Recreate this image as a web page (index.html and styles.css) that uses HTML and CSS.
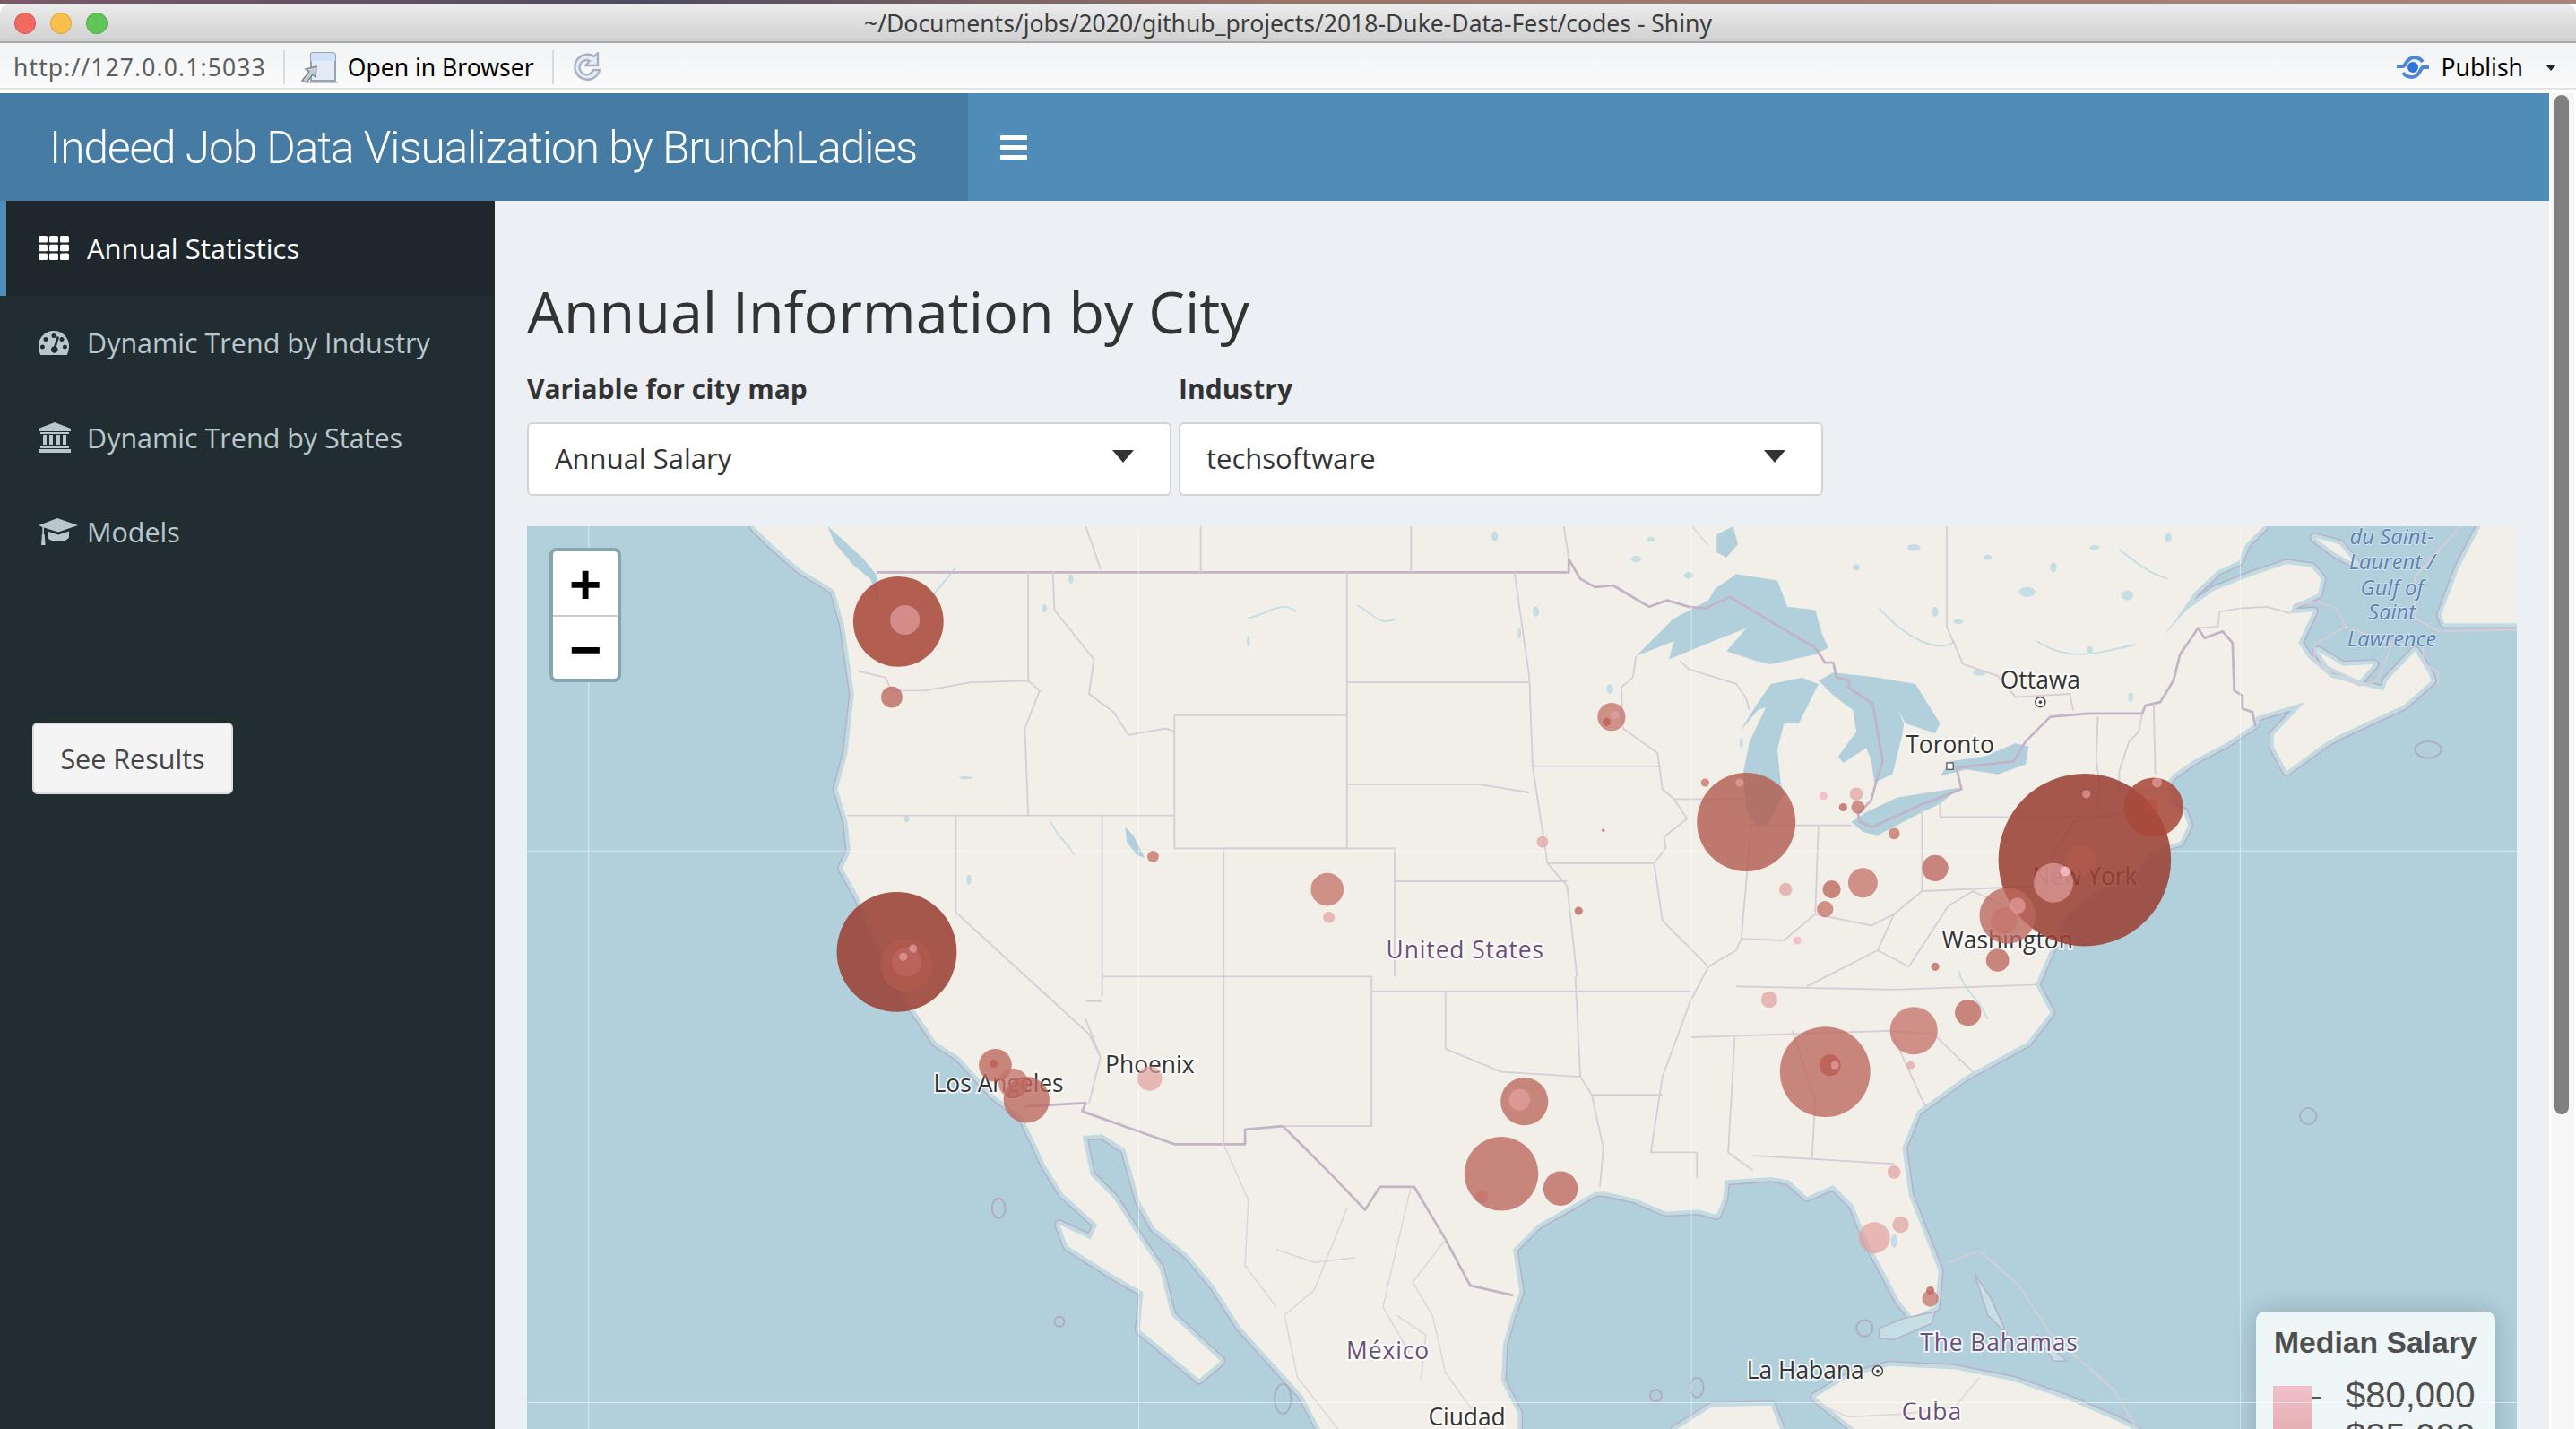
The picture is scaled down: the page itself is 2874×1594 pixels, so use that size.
FILE: index.html
```html
<!DOCTYPE html>
<html lang="en">
<head>
    <meta charset="UTF-8">
    <title>Indeed Job Data Visualization by BrunchLadies</title>
    <link rel="stylesheet" href="styles.css">
</head>
<body>
<div class="window">
    <div class="desktop-strip"></div>

    <div class="titlebar">
        <div class="lights">
            <span class="light red"></span>
            <span class="light yellow"></span>
            <span class="light green"></span>
        </div>
        <div class="window-title">~/Documents/jobs/2020/github_projects/2018-Duke-Data-Fest/codes - Shiny</div>
    </div>

    <div class="toolbar">
        <span class="url">http://127.0.0.1:5033</span>
        <span class="tool-sep"></span>
        <svg class="open-icon" viewBox="0 0 44 38">
            <path d="M14 3h22c2 0 3 1 3 3v28H12V5c0-1 1-2 2-2z" fill="#e3ecf6" stroke="#9aa3ad" stroke-width="2"/>
            <path d="M14 3h22c2 0 3 1 3 3v6H12V5c0-1 1-2 2-2z" fill="#cfe2fa"/>
            <path d="M2 34l8-10-4-3 12-3-1 12-3-3-7 9z" fill="#c5cdd6" stroke="#7f8994" stroke-width="1.5"/>
            <path d="M8 36h34" stroke="#c8ccd2" stroke-width="2"/>
        </svg>
        <span class="open-label">Open in Browser</span>
        <span class="tool-sep second"></span>
        <svg class="refresh-icon" viewBox="0 0 36 38">
            <path d="M32 22a14 14 0 1 1-6-15l4-4v14H16l5-5a8 8 0 1 0 4 10z" fill="#e4ebf5" stroke="#a6b2c4" stroke-width="2.4" stroke-linejoin="round"/>
        </svg>
        <span class="tool-spacer"></span>
        <svg class="publish-icon" viewBox="0 0 38 30">
            <path d="M1 14h7c3-1 4-9 12-10 5 0 8 2 10 5" fill="none" stroke="#4f86d6" stroke-width="4"/>
            <path d="M37 15h-7c-3 2-4 11-12 11-5 0-8-2-10-5" fill="none" stroke="#4f86d6" stroke-width="4"/>
            <circle cx="19" cy="15" r="6" fill="#2f74dc"/>
        </svg>
        <span class="publish-label">Publish</span>
        <span class="publish-caret"></span>
    </div>

    <div class="app">
        <div class="app-main">
            <header class="app-header">
                <div class="logo">Indeed Job Data Visualization by BrunchLadies</div>
                <div class="navbar">
                    <span class="burger"><i></i><i></i><i></i></span>
                </div>
            </header>

            <div class="app-body">
                <aside class="sidebar">
                    <ul class="menu">
                        <li class="menu-item active">
                            <span class="menu-icon">
                                <svg viewBox="0 0 34 27" width="34" height="27">
                                    <rect x="0" y="0" width="10" height="7.5" rx="1.5"/><rect x="12" y="0" width="10" height="7.5" rx="1.5"/><rect x="24" y="0" width="10" height="7.5" rx="1.5"/>
                                    <rect x="0" y="9.7" width="10" height="7.5" rx="1.5"/><rect x="12" y="9.7" width="10" height="7.5" rx="1.5"/><rect x="24" y="9.7" width="10" height="7.5" rx="1.5"/>
                                    <rect x="0" y="19.5" width="10" height="7.5" rx="1.5"/><rect x="12" y="19.5" width="10" height="7.5" rx="1.5"/><rect x="24" y="19.5" width="10" height="7.5" rx="1.5"/>
                                </svg>
                            </span>
                            Annual Statistics
                        </li>
                        <li class="menu-item">
                            <span class="menu-icon">
                                <svg viewBox="0 0 34 27" width="34" height="27">
                                    <path fill-rule="evenodd" d="M17 0c9.500 0 17 7.500 17 17 0 3.500-.8 6.800-2.200 10H2.200C.8 23.800 0 20.500 0 17 0 7.500 7.500 0 17 0zM17 3a2.500 2.500 0 1 0 0 5 2.500 2.500 0 0 0 0-5zM8 7a2.500 2.500 0 1 0 0 5 2.500 2.500 0 0 0 0-5zM26 7a2.500 2.500 0 1 0 0 5 2.500 2.500 0 0 0 0-5zM4.500 15.500a2.500 2.500 0 1 0 0 5 2.500 2.500 0 0 0 0-5zM29.500 15.500a2.500 2.500 0 1 0 0 5 2.500 2.500 0 0 0 0-5zM20.500 6l-3.200 11.200a3.800 3.800 0 1 0 2.600.6L23 7z"/>
                                </svg>
                            </span>
                            Dynamic Trend by Industry
                        </li>
                        <li class="menu-item">
                            <span class="menu-icon">
                                <svg viewBox="0 0 36 34" width="36" height="34">
                                    <path d="M18 0l18 7v3H0V7z"/>
                                    <path d="M2 11h32v2H2zM5 14h4v11H5zM12 14h4v11h-4zM20 14h4v11h-4zM27 14h4v11h-4zM2 26h32v3H2zM0 30h36v4H0z"/>
                                </svg>
                            </span>
                            Dynamic Trend by States
                        </li>
                        <li class="menu-item">
                            <span class="menu-icon">
                                <svg viewBox="0 0 44 30" width="44" height="30">
                                    <path d="M21 0L44 8 22 15.500 6 10.500V18c1 .6 1.200 1.500.8 2.300L7.600 30H3l.8-9.700C3.300 19.500 3.500 18.600 4.400 18V9.900L0 8z"/>
                                    <path d="M10 14.500l12 4 12-4v6c0 3-5.500 5.500-12 5.500s-12-2.500-12-5.500z"/>
                                </svg>
                            </span>
                            Models
                        </li>
                    </ul>
                    <button class="results-btn">See Results</button>
                </aside>

                <main class="content">
                    <h1 class="page-title">Annual Information by City</h1>
                    <div class="filters">
                        <div class="filter">
                            <label class="filter-label">Variable for city map</label>
                            <div class="select-box">Annual Salary<span class="select-caret"></span></div>
                        </div>
                        <div class="filter">
                            <label class="filter-label">Industry</label>
                            <div class="select-box">techsoftware<span class="select-caret"></span></div>
                        </div>
                    </div>

                    <div class="map">
                        <svg class="map-svg" viewBox="321 320 1211 550">
                            <defs>
                                <path id="land" d="M459,320 L469,330 L487,346 L497,352 L508,359 L514,380 L517,401 L520,422 L516,458 L510,480 L516,500 L518,518 L513,528 L523,546 L532,570 L553,609 L570,634 L584,643 L605,666 L623,680 L636,708 L647,726 L668,745 L664,754 L645,745 L650,758 L680,777 L696,786 L694,809 L730,839 L743,828 L713,800 L706,772 L694,754 L678,729 L664,715 L659,691 L671,690 L685,699 L694,731 L703,747 L723,763 L739,782 L755,807 L793,849 L804,870 L924,870 L924,860 L914,840 L915,818 L920,800 L925,786 L921,760 L936,745 L959,732 L971,725 L977,725 L995,729 L1014,737 L1034,736 L1045,739 L1049,729 L1050,718 L1078,716 L1089,718 L1100,728 L1116,721 L1128,733 L1137,755 L1156,791 L1164,801 L1178,795 L1180,773 L1162,727 L1158,698 L1167,676 L1196,655 L1234,634 L1248,616 L1239,599 L1248,578 L1258,556 L1275,543 L1296,533 L1311,517 L1327,512 L1332,502 L1329,494 L1321,492 L1319,476 L1323,471 L1336,462 L1355,452 L1373,440 L1373,436 L1403,427 L1384,447 L1384,454 L1392,469 L1415,452 L1424,447 L1463,429 L1480,414 L1478,409 L1470,396 L1453,414 L1451,420 L1434,416 L1419,412 L1405,400 L1399,391 L1408,372 L1394,373 L1396,368 L1411,361 L1413,352 L1407,345 L1392,343 L1371,350 L1348,359 L1331,371 L1315,389 L1313,392 L1325,376 L1336,360 L1350,347 L1363,341 L1367,331 L1378,320 Z"/>
                                <path id="isles" d="M1409,327 L1424,331 L1434,343 L1421,336 Z M1411,396 L1426,405 L1445,404 L1436,414 L1417,405 Z M1510,320 L1497,345 L1486,374 L1488,379 L1532,379 L1532,320 Z M1105,850 L1125,838 L1150,831 L1190,833 L1225,840 L1260,852 L1290,865 L1300,870 L1130,870 Z M1020,870 L1042,856 L1078,855 L1084,870 Z"/>
                            </defs>

                            <rect class="sea" x="321" y="320" width="1211" height="550"/>
                            <use href="#land" class="coast-line"/>
                            <use href="#isles" class="coast-line"/>
                            <use href="#land" class="coast-halo"/>
                            <use href="#isles" class="coast-halo"/>
                            <use href="#land" class="land"/>
                            <use href="#isles" class="land"/>

                            <!-- lakes and rivers -->
                            <path class="lake" d="M996,399 L1019,376 L1040,365 L1044,358 L1057,349 L1082,353 L1088,369 L1105,371 L1109,385 L1113,394 L1105,398 L1078,404 L1069,402 L1051,396 L1063,382 L1040,391 L1016,401 L1019,390 Z"/>
                            <path class="lake" d="M1059,445 L1069,429 L1078,416 L1097,412 L1107,416 L1095,440 L1086,440 L1082,456 L1084,476 L1086,483 L1076,502 L1069,503 L1063,492 L1061,471 L1065,451 L1075,430 L1070,432 Z"/>
                            <path class="lake" d="M1107,414 L1116,409 L1143,412 L1166,416 L1181,440 L1178,446 L1160,440 L1155,431 L1159,440 L1158,447 L1152,471 L1141,476 L1139,462 L1136,455 L1122,464 L1119,460 L1130,445 L1128,432 L1116,423 Z"/>
                            <path class="lake" d="M1127,500 L1136,494 L1155,485 L1193,479 L1181,489 L1170,494 L1143,508 L1134,506 Z"/>
                            <path class="lake" d="M1181,472 L1187,463 L1208,460 L1227,452 L1235,454 L1233,465 L1216,471 L1197,468 Z"/>
                            <path class="lake" d="M1045,325 L1055,320 L1058,331 L1051,339 L1045,336 Z"/>
                            <path class="lake" d="M504,320 L514,329 L526,340 L534,350 L535,368 L530,352 L520,344 L508,330 Z"/>
                            <path class="lake" d="M685,503 L690,508 L697,522 L692,520 L686,512 Z"/>
                            <g class="speck">
                                <ellipse cx="1028" cy="350" rx="3" ry="2"/><ellipse cx="1178" cy="372" rx="2" ry="3"/><ellipse cx="1234" cy="360" rx="5" ry="3"/>
                                <ellipse cx="1295" cy="362" rx="3.500" ry="3"/><ellipse cx="980" cy="419" rx="2" ry="3"/><ellipse cx="1192" cy="378" rx="3" ry="1.500"/>
                                <ellipse cx="1165" cy="333" rx="4" ry="2"/><ellipse cx="996" cy="340" rx="3" ry="2"/><ellipse cx="1005" cy="328" rx="2.500" ry="1.500"/>
                                <ellipse cx="1130" cy="345" rx="2" ry="2"/><ellipse cx="1210" cy="339" rx="2.500" ry="1.500"/><ellipse cx="1250" cy="345" rx="2" ry="3"/>
                                <ellipse cx="1275" cy="333" rx="3" ry="1.500"/><ellipse cx="1320" cy="327" rx="2" ry="3"/><ellipse cx="1060" cy="452" rx="1" ry="3"/>
                                <ellipse cx="1205" cy="409" rx="4" ry="2"/><ellipse cx="1272" cy="395" rx="2" ry="2"/><ellipse cx="1297" cy="424" rx="1.500" ry="3"/>
                                <ellipse cx="652" cy="352" rx="1.500" ry="3"/><ellipse cx="636" cy="370" rx="1.500" ry="2.500"/><ellipse cx="760" cy="390" rx="1" ry="3"/>
                                <ellipse cx="910" cy="326" rx="2" ry="3"/><ellipse cx="935" cy="372" rx="2" ry="3"/><ellipse cx="925" cy="385" rx="1" ry="3"/>
                                <ellipse cx="588" cy="473" rx="4" ry="1"/><ellipse cx="552" cy="498" rx="1.500" ry="2"/><ellipse cx="590" cy="535" rx="1.500" ry="3"/>
                                <ellipse cx="1153" cy="755" rx="2" ry="4"/>
                            </g>
                            <path class="pond" d="M1290,334 C1300,342 1310,350 1320,352 M1240,390 C1262,404 1280,396 1300,392 M560,372 C570,360 576,352 582,345 M760,376 C775,372 780,365 789,372 M826,368 C835,372 840,382 850,376 M1192,590 C1196,604 1204,606 1210,620 M640,500 C644,510 650,512 654,520 M1144,370 C1160,388 1180,398 1190,390 M1277,436 L1276,461"/>
                            <path class="shoal" d="M1144,808 L1159,802 L1178,798 L1176,805 L1153,815 L1144,814 Z M1202,775 L1212,790 L1222,812 L1210,800 Z M1240,812 L1258,828 L1250,828 Z"/>

                            <!-- country borders -->
                            <path class="border-major" d="M534,348 L955,348 L955,340 L962,352 L971,357 L982,356 L992,362 L1004,369 L1015,365 L1028,369 L1038,370 L1053,363 L1105,394 L1111,403 L1116,403 L1118,412 L1126,414 L1125,418 L1140,428 L1146,463 L1142,476 L1139,487 L1131,495 L1132,500 L1140,503 L1168,490 L1194,480 L1191,467 L1226,463 L1233,451 L1248,436 L1271,434 L1304,434 L1306,429 L1315,427 L1323,414 L1327,398 L1338,382 L1342,388 L1353,384 L1359,391 L1360,420 L1365,423 L1365,431 L1371,433 L1373,442"/>
                            <path class="border-major" d="M624,673 L661,671 L659,676 L715,696 L758,696 L758,687 L781,685 L811,715 L831,736 L840,722 L861,722 L880,754 L895,782 L921,788"/>

                            <!-- provinces and states -->
                            <path class="border" d="M731,320 L731,348 M859,320 L859,348 M952,320 L955,340 M661,320 L670,346 M1185,320 L1185,381 L1195,404 L1216,411 L1227,424 L1260,422 L1262,432 M1338,382 L1350,381 L1351,372 L1363,370 L1380,369 L1394,373"/>
                            <path class="border" d="M626,348 L626,414 M522,408 L539,412 L543,420 L563,420 L591,415 L626,414 L633,420 L624,443 L626,496 M516,496 L715,496 M641,348 L642,371 L666,401 L663,422 L678,433 L687,447 L710,443 L715,445 M715,435 L820,435 M715,435 L715,516 L820,516 M820,348 L820,516 M820,415 L931,415 M820,477 L900,477 L931,482"/>
                            <path class="border" d="M922,348 L931,412 L933,466 L942,525 L954,539 L960,594 M745,516 L849,516 M849,536 L954,536 M849,516 L849,594 M671,496 L671,606 M745,516 L745,696 M671,594 L835,594 M835,594 L835,685 L781,685 M835,603 L961,603 M880,603 L880,638 L914,652 L962,655 L969,666 L976,698 L974,722 M959,594 L962,655"/>
                            <path class="border" d="M582,496 L582,555 L663,629 L670,643 L661,620 M663,629 L670,643 L663,671 M661,609 L671,609"/>
                            <path class="border" d="M942,525 L1007,525 L1014,516 L1013,509 L1027,498 L1019,486 L1012,480 L1009,458 L988,443 L987,418 L994,412 L996,399 M933,466 L1010,466 M1019,486 L1067,486 M1023,402 L1028,407 L1057,416 L1063,425 L1065,432"/>
                            <path class="border" d="M1007,525 L1012,560 L1040,588 L1029,609 L1012,655 L1005,701 L1033,701 L1033,717 M960,603 L1029,603 M969,666 L1012,666 M1029,631 L1151,627 M1057,600 L1153,602 L1241,599 M1056,631 L1052,701 L1067,712 M1091,627 L1105,669 L1103,705 L1153,708 M1067,703 L1103,705 M1151,627 L1172,673 M1151,627 L1177,629 L1201,652"/>
                            <path class="border" d="M1066,502 L1060,571 L1057,578 L1040,588 M1060,571 L1086,572 L1105,556 L1139,563 L1153,556 L1170,542 M1107,502 L1105,556 M1064,502 L1127,502 M1170,492 L1170,542 L1239,539 M1181,488 L1181,497 L1247,497 L1289,497 M1153,556 L1143,578 L1162,588 L1186,551 L1201,542 L1239,560 M1143,578 L1100,600"/>
                            <path class="border" d="M1277,436 L1276,462 L1278,476 L1277,494 M1304,434 L1302,445 L1296,451 L1290,469 L1290,481 M1311,429 L1312,471 M1278,482 L1320,480 M1275,496 L1315,493 M1239,539 L1262,500 L1275,496"/>
                            <path class="border-faint" d="M859,722 L850,760 L842,795 L858,823 M820,735 L800,785 L782,800 L790,838 L815,870 M880,754 L860,780 L872,800 L880,835 L905,870 M850,800 L868,812 L865,840 M745,696 L760,730 L758,770 L777,795 M777,760 L800,768 L825,765 M1105,853 L1125,862 L1160,860 L1190,856 M1190,856 L1205,838 M1030,320 L1040,332"/>
                            <path class="border" d="M1186,768 L1205,761 L1229,782 L1248,811 L1287,846 L1300,868 M1498,320 L1470,351 L1470,376 L1485,384 L1532,383 M1396,368 L1411,366 L1422,370 L1428,381 L1409,392 L1409,402 L1436,417 L1447,414 L1456,392 L1428,381 M1475,394 L1475,403 L1484,409 L1484,416"/>
                            <ellipse class="ring" cx="1478" cy="456" rx="8" ry="5"/>
                            <ellipse class="ring" cx="1405" cy="679" rx="5" ry="5"/>
                            <ellipse class="ring" cx="1135" cy="808" rx="5" ry="5"/>
                            <ellipse class="ring" cx="1008" cy="849" rx="3.500" ry="3.500"/>
                            <ellipse class="ring" cx="1033" cy="844" rx="4" ry="6"/>
                            <ellipse class="ring" cx="608" cy="735" rx="4" ry="6"/>
                            <ellipse class="ring" cx="645" cy="804" rx="3" ry="3"/>
                            <ellipse class="ring" cx="781" cy="851" rx="5" ry="9"/>

                            <!-- tile seams -->
                            <path class="seam" d="M358.500,320 V870 M693.300,320 V870 M1029.600,320 V870 M1363.700,320 V870 M321,517.600 H1532"/>

                            <!-- labels -->
                            <g class="labels">
                                <text class="city" x="1242" y="419">Ottawa</text>
                                <text class="city" x="1187" y="458">Toronto</text>
                                <text class="city" x="1269" y="538">New York</text>
                                <text class="city" x="1222" y="577">Washington</text>
                                <text class="city" x="608" y="664">Los Angeles</text>
                                <text class="city" x="700" y="653">Phoenix</text>
                                <text class="city" x="1099" y="839">La Habana</text>
                                <text class="city" x="893" y="867">Ciudad</text>
                                <text class="country" x="892" y="583">United States</text>
                                <text class="country" x="845" y="827">México</text>
                                <text class="country" x="1217" y="822">The Bahamas</text>
                                <text class="country" x="1176" y="864">Cuba</text>
                                <text class="gulf" x="1456" y="331">du Saint-</text>
                                <text class="gulf" x="1456" y="346">Laurent /</text>
                                <text class="gulf" x="1456" y="362">Gulf of</text>
                                <text class="gulf" x="1456" y="377">Saint</text>
                                <text class="gulf" x="1456" y="393">Lawrence</text>
                            </g>
                            <circle class="capital" cx="1242" cy="427" r="3"/>
                            <circle class="capital-dot" cx="1242" cy="427" r="1"/>
                            <rect class="town" x="1185" y="464" width="4" height="4"/>
                            <circle class="capital" cx="1143" cy="834" r="3"/>
                            <circle class="capital-dot" cx="1143" cy="834" r="1"/>

                            <!-- salary circles -->
                            <g>
                                <circle class="dot-b" cx="547" cy="378" r="27.500"/>
                                <circle class="dot-f" cx="551" cy="377" r="9"/>
                                <circle class="dot-d" cx="543" cy="424" r="6.500"/>
                                <circle class="dot-a" cx="546" cy="579" r="36.500"/>
                                <circle class="dot-c" cx="552" cy="587" r="16"/>
                                <circle class="dot-d" cx="552" cy="585" r="9"/>
                                <circle class="dot-f" cx="556" cy="577" r="2.500"/>
                                <circle class="dot-f" cx="550" cy="582" r="2.500"/>
                                <circle class="dot-d" cx="606" cy="648" r="10"/>
                                <circle class="dot-e" cx="617" cy="659" r="9"/>
                                <circle class="dot-d" cx="625" cy="669" r="14"/>
                                <circle class="dot-small" cx="605" cy="647" r="2.500"/>
                                <circle class="dot-f" cx="700" cy="656" r="7.500"/>
                                <circle class="dot-e" cx="702" cy="521" r="3.500"/>
                                <circle class="dot-e" cx="808" cy="541" r="10"/>
                                <circle class="dot-f" cx="809" cy="558" r="3.500"/>
                                <circle class="dot-e" cx="981" cy="436" r="8.500"/>
                                <circle class="dot-small" cx="978" cy="439" r="2.500"/>
                                <circle class="dot-f" cx="983" cy="435" r="2.500"/>
                                <circle class="dot-c" cx="1063" cy="500" r="30"/>
                                <circle class="dot-f" cx="1059" cy="476" r="2.500"/>
                                <circle class="dot-e" cx="1038" cy="476" r="2.500"/>
                                <circle class="dot-g" cx="1110" cy="484" r="2.500"/>
                                <circle class="dot-f" cx="1130" cy="483" r="4"/>
                                <circle class="dot-e" cx="1131" cy="491" r="4"/>
                                <circle class="dot-d" cx="1122" cy="491" r="2.500"/>
                                <circle class="dot-e" cx="1153" cy="507" r="3.500"/>
                                <circle class="dot-d" cx="1178" cy="528" r="8"/>
                                <circle class="dot-e" cx="1134" cy="537" r="9"/>
                                <circle class="dot-d" cx="1115" cy="541" r="5.500"/>
                                <circle class="dot-f" cx="1087" cy="541" r="4"/>
                                <circle class="dot-e" cx="1111" cy="553" r="5"/>
                                <circle class="dot-g" cx="1094" cy="572" r="2.500"/>
                                <circle class="dot-small" cx="976" cy="505" r="1"/>
                                <circle class="dot-f" cx="939" cy="512" r="3.500"/>
                                <circle class="dot-d" cx="961" cy="554" r="2.500"/>
                                <circle class="dot-d" cx="1178" cy="588" r="2.500"/>
                                <circle class="dot-a" cx="1269" cy="523" r="52.500"/>
                                <circle class="dot-b" cx="1311" cy="491" r="18"/>
                                <circle class="dot-small" cx="1309" cy="490" r="4"/>
                                <circle class="dot-f" cx="1313" cy="476" r="3"/>
                                <circle class="dot-c" cx="1267" cy="523" r="9"/>
                                <circle class="dot-f" cx="1270" cy="483" r="2.500"/>
                                <circle class="dot-f" cx="1250" cy="537" r="12"/>
                                <circle class="dot-g" cx="1257" cy="530" r="3"/>
                                <circle class="dot-d" cx="1222" cy="557" r="17"/>
                                <circle class="dot-f" cx="1228" cy="551" r="5"/>
                                <circle class="dot-e" cx="1220" cy="560" r="8"/>
                                <circle class="dot-d" cx="1216" cy="584" r="7"/>
                                <circle class="dot-d" cx="1111" cy="652" r="27.500"/>
                                <circle class="dot-small" cx="1114" cy="648" r="6.500"/>
                                <circle class="dot-f" cx="1117" cy="648" r="2.500"/>
                                <circle class="dot-e" cx="1165" cy="627" r="14.500"/>
                                <circle class="dot-d" cx="1198" cy="616" r="8"/>
                                <circle class="dot-f" cx="1163" cy="648" r="2.500"/>
                                <circle class="dot-f" cx="1077" cy="608" r="5"/>
                                <circle class="dot-d" cx="928" cy="670" r="14.500"/>
                                <circle class="dot-f" cx="925" cy="669" r="6.500"/>
                                <circle class="dot-d" cx="914" cy="714" r="22.500"/>
                                <circle class="dot-e" cx="902" cy="728" r="4"/>
                                <circle class="dot-d" cx="950" cy="723" r="10.500"/>
                                <circle class="dot-f" cx="1141" cy="753" r="9.500"/>
                                <circle class="dot-f" cx="1157" cy="745" r="5"/>
                                <circle class="dot-f" cx="1153" cy="713" r="4"/>
                                <circle class="dot-small" cx="1175" cy="790" r="5"/>
                                <circle class="dot-d" cx="1175" cy="785" r="2.500"/>
                            </g>
                        </svg>

                        <div class="zoom-control">
                            <span class="zoom-btn">+</span>
                            <span class="zoom-btn">−</span>
                        </div>

                        <div class="legend">
                            <div class="legend-title">Median Salary</div>
                            <div class="legend-scale">
                                <div class="legend-bar"></div>
                                <div class="legend-labels">
                                    <span>$80,000</span>
                                    <span>$85,000</span>
                                </div>
                            </div>
                        </div>
                        <div class="seam-bottom"></div>
                    </div>
                </main>
            </div>
        </div>
        <div class="scroll-track"><div class="scroll-thumb"></div></div>
    </div>
</div>
</body>
</html>
```
FILE: styles.css
```css
* {
    box-sizing: border-box;
}

html, body {
    margin: 0;
    height: 100%;
    overflow: hidden;
    background: #fff;
}

.window {
    display: flex;
    flex-direction: column;
    height: 100vh;
    font-family: "Open Sans", "Noto Sans", sans-serif;
}

.desktop-strip {
    height: 4px;
    background: linear-gradient(90deg, #7b5a68, #4f4a60 25%, #9b7468 50%, #a8837c 100%);
}

/* window chrome */
.titlebar {
    position: relative;
    display: flex;
    align-items: center;
    justify-content: center;
    height: 44px;
    padding-top: 2px;
    border-radius: 12px 12px 0 0;
    background: linear-gradient(#ececec, #d0d0d0);
    border-bottom: 2px solid #a8a8a8;
    flex: none;
}

.lights {
    position: absolute;
    left: 16px;
    top: 10px;
    display: flex;
    gap: 16px;
}

.light {
    width: 24px;
    height: 24px;
    border-radius: 50%;
    border: 1px solid rgba(0, 0, 0, .12);
}

.red { background: #f2695f; }
.yellow { background: #f9be4b; }
.green { background: #5fc554; }

.window-title {
    font-family: "Noto Sans", sans-serif;
    font-size: 26.500px;
    color: #3c3c3c;
}

.toolbar {
    display: flex;
    align-items: center;
    height: 52px;
    padding: 4px 22px 0 15px;
    background: linear-gradient(#f1f3f5, #fbfbfb);
    border-bottom: 2px solid #e3e3e3;
    flex: none;
    font-family: "Noto Sans", sans-serif;
    font-size: 26.500px;
    color: #000;
}

.url {
    color: #5d5d5d;
    letter-spacing: 1.100px;
}

.tool-sep {
    width: 2px;
    height: 38px;
    margin: 0 17px 0 19px;
    background: #d9dbdd;
}

.tool-sep.second {
    margin: 0 19px 0 20px;
}

.open-icon {
    width: 44px;
    height: 38px;
    margin-right: 9px;
}

.refresh-icon {
    width: 36px;
    height: 38px;
}

.tool-spacer {
    flex: 1;
}

.publish-icon {
    width: 38px;
    height: 30px;
    margin-right: 13px;
}

.publish-caret {
    margin-left: 25px;
    border: 6px solid transparent;
    border-top: 7px solid #222;
    border-bottom: 0;
}

.app {
    display: flex;
    flex: 1;
    min-height: 0;
    background: #fff;
    padding-top: 4px;
}

.app-main {
    display: flex;
    flex-direction: column;
    width: 2844px;
    flex: none;
    min-height: 0;
}

.scroll-track {
    width: 26px;
    margin-left: 2px;
    padding: 2px 4px;
    background: #f6f6f6;
}

.scroll-thumb {
    width: 16px;
    height: 1137px;
    border-radius: 8px;
    background: #808080;
}

/* header */
.app-header {
    display: flex;
    height: 120px;
    flex: none;
    background: #4f8cb8;
}

.logo {
    width: 1080px;
    padding: 2px 0 0 55px;
    background: #467ba3;
    color: #fff;
    font-family: Roboto, "Liberation Sans", sans-serif;
    font-weight: 300;
    font-size: 49.500px;
    letter-spacing: -1px;
    line-height: 118px;
    white-space: nowrap;
}

.navbar {
    display: flex;
    align-items: center;
    padding-left: 36px;
    flex: 1;
}

.burger {
    display: flex;
    flex-direction: column;
    gap: 6px;
    width: 30px;
}

.burger i {
    height: 5px;
    border-radius: 1px;
    background: #fff;
}

.app-body {
    display: flex;
    flex: 1;
    min-height: 0;
}

/* sidebar */
.sidebar {
    width: 552px;
    flex: none;
    background: #222d32;
}

.menu {
    margin: 0;
    padding: 0;
    list-style: none;
}

.menu-item {
    display: flex;
    align-items: center;
    height: 105.500px;
    padding-left: 43px;
    color: #b8c7ce;
    font-size: 30.500px;
}

.menu-item.active {
    padding-left: 36px;
    border-left: 7px solid #4f8cb8;
    background: #1e282c;
    color: #fff;
    font-size: 31px;
}

.menu-icon {
    display: flex;
    align-items: center;
    width: 54px;
    flex: none;
}

.menu-icon svg {
    fill: #b8c7ce;
}

.active .menu-icon svg {
    fill: #fff;
}

.results-btn {
    display: block;
    width: 224px;
    height: 80px;
    margin: 160px 0 0 36px;
    border: 2px solid #ddd;
    border-radius: 6px;
    background: #f4f4f4;
    color: #444;
    font-family: inherit;
    font-size: 30.500px;
}

/* main column */
.content {
    display: flex;
    flex-direction: column;
    flex: 1;
    min-width: 0;
    padding: 0 36px;
    background: #ecf0f5;
}

.page-title {
    margin: 83px 0 0;
    color: #333;
    font-size: 64.700px;
    font-weight: 400;
    line-height: 80px;
}

.filters {
    display: flex;
    gap: 8px;
    margin-top: 25px;
}

.filter {
    width: 719px;
}

.filter-label {
    display: block;
    color: #333;
    font-size: 30px;
    font-weight: 700;
    line-height: 44px;
}

.select-box {
    display: flex;
    align-items: center;
    justify-content: space-between;
    height: 82px;
    margin-top: 15px;
    padding: 0 40px 2px 29px;
    border: 2px solid #d2d3d5;
    border-radius: 6px;
    background: #fff;
    color: #333;
    font-size: 31px;
}

.select-caret {
    margin-top: -4px;
    border: 12px solid transparent;
    border-top: 14px solid #333;
    border-bottom: 0;
}

/* map */
.map {
    position: relative;
    margin-top: 34px;
    flex: 1;
    min-height: 0;
    overflow: hidden;
}

.map-svg {
    display: block;
    width: 100%;
    height: auto;
}

.sea { fill: #b1d0dc; }
.land { fill: #f2efe9; }

.coast-line {
    fill: none;
    stroke: #b7b0c6;
    stroke-width: 6.400;
    stroke-linejoin: round;
}

.coast-halo {
    fill: none;
    stroke: #c2dbe2;
    stroke-width: 4.800;
    stroke-linejoin: round;
}

.lake { fill: #b1d0dc; }

.speck { fill: #c5dde4; }

.pond {
    fill: none;
    stroke: #c4dde4;
    stroke-width: 1;
}

.shoal {
    fill: #c6dfe5;
    stroke: #b7b0c6;
    stroke-width: .8;
}

.border-major {
    fill: none;
    stroke: #c3b3c7;
    stroke-width: 1.500;
    stroke-linejoin: round;
}

.border {
    fill: none;
    stroke: #d8cdd6;
    stroke-width: 1;
    stroke-linejoin: round;
}

.border-faint {
    fill: none;
    stroke: #ddd4da;
    stroke-width: .8;
}

.ring {
    fill: none;
    stroke: #b0a9c2;
    stroke-width: 1;
}

.seam {
    fill: none;
    stroke: #fff;
    stroke-opacity: .5;
    stroke-width: .6;
}

.labels text {
    font-family: "Open Sans", "Noto Sans", sans-serif;
    font-size: 14.400px;
    text-anchor: middle;
    paint-order: stroke;
    stroke: rgba(255, 255, 255, .85);
    stroke-width: 2;
}

.city { fill: #333; }

.labels .country {
    fill: #6a5079;
    letter-spacing: .5px;
}

.labels .gulf {
    fill: #5e80b4;
    font-size: 13px;
    font-style: italic;
    stroke: rgba(255, 255, 255, .45);
    stroke-width: 1;
}

.capital {
    fill: #fff;
    stroke: #444;
    stroke-width: .8;
}

.capital-dot { fill: #444; }

.town {
    fill: #fff;
    stroke: #555;
    stroke-width: .7;
}

.dot-a { fill: #9a4034; fill-opacity: .87; }
.dot-b { fill: #a8493c; fill-opacity: .87; }
.dot-c { fill: #b15a4e; fill-opacity: .8; }
.dot-d { fill: #bd675e; fill-opacity: .78; }
.dot-e { fill: #c5746d; fill-opacity: .78; }
.dot-f { fill: #e3a09f; fill-opacity: .7; }
.dot-g { fill: #f1bcc2; fill-opacity: .9; }
.dot-small { fill: #b6483f; fill-opacity: .55; }

.zoom-control {
    position: absolute;
    top: 24px;
    left: 25px;
    width: 80px;
    border: 4px solid #88a4ae;
    border-radius: 8px;
    background: #fff;
}

.zoom-btn {
    display: block;
    height: 71px;
    color: #000;
    font-family: "Liberation Sans", sans-serif;
    font-size: 62px;
    font-weight: 700;
    line-height: 74px;
    text-align: center;
}

.zoom-btn + .zoom-btn {
    border-top: 2px solid #ccc;
}

.legend {
    position: absolute;
    top: 876px;
    right: 24px;
    width: 267px;
    padding: 14px 0 14px 20px;
    border-radius: 10px;
    background: rgba(255, 255, 255, .8);
    box-shadow: 0 0 28px rgba(0, 0, 0, .2);
    color: #4f4f4f;
    font-family: "Liberation Sans", sans-serif;
}

.legend-title {
    font-size: 33.700px;
    font-weight: 700;
    line-height: 40px;
    white-space: nowrap;
}

.legend-scale {
    display: flex;
    margin-top: 29px;
}

.legend-bar {
    position: relative;
    width: 43px;
    height: 200px;
    margin-left: -1px;
    background: linear-gradient(#f0c0c8, #c97a76);
}

.legend-bar::after {
    content: "";
    position: absolute;
    top: 12px;
    right: -11px;
    width: 10px;
    height: 2px;
    background: #555;
}

.legend-labels {
    display: flex;
    flex-direction: column;
    margin-left: 38px;
    margin-top: -13px;
    font-size: 40px;
    line-height: 46px;
}

.seam-bottom {
    position: absolute;
    top: 977px;
    left: 0;
    right: 0;
    height: 1px;
    background: rgba(255, 255, 255, .55);
}
```
